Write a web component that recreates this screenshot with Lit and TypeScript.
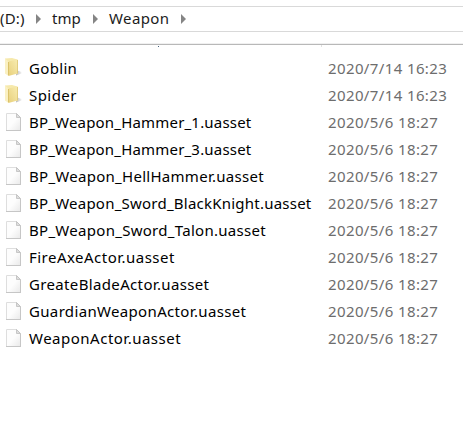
import { LitElement, html, css, svg } from "lit";
import { customElement } from "lit/decorators.js";
import { styleMap } from "lit/directives/style-map.js";

interface Entry {
  name: string;
  date: string;
  tracking: number;
  folder?: boolean;
}

const entries: Entry[] = [
  { name: "Goblin", date: "2020/7/14 16:23", tracking: 0.33, folder: true },
  { name: "Spider", date: "2020/7/14 16:23", tracking: 0.45, folder: true },
  { name: "BP_Weapon_Hammer_1.uasset", date: "2020/5/6 18:27", tracking: 0.19 },
  { name: "BP_Weapon_Hammer_3.uasset", date: "2020/5/6 18:27", tracking: 0.19 },
  { name: "BP_Weapon_HellHammer.uasset", date: "2020/5/6 18:27", tracking: 0.28 },
  { name: "BP_Weapon_Sword_BlackKnight.uasset", date: "2020/5/6 18:27", tracking: 0.23 },
  { name: "BP_Weapon_Sword_Talon.uasset", date: "2020/5/6 18:27", tracking: 0.29 },
  { name: "FireAxeActor.uasset", date: "2020/5/6 18:27", tracking: 0.48 },
  { name: "GreateBladeActor.uasset", date: "2020/5/6 18:27", tracking: 0.35 },
  { name: "GuardianWeaponActor.uasset", date: "2020/5/6 18:27", tracking: 0.34 },
  { name: "WeaponActor.uasset", date: "2020/5/6 18:27", tracking: 0.5 },
];

const folderIcon = svg`
  <defs>
    <linearGradient id="front" x1="1" y1="0" x2="0" y2="1">
      <stop offset="0" stop-color="#f8ecb0"/><stop offset="1" stop-color="#e8d07c"/>
    </linearGradient>
    <linearGradient id="shade" x1="0" y1="0" x2="1" y2="0">
      <stop offset="0" stop-color="#bcbcbc"/><stop offset="1" stop-color="#f2f2f2"/>
    </linearGradient>
  </defs>
  <path d="M16 15l5.500 2v1.500l-5.500 2z" fill="url(#shade)"/>
  <path d="M5 3.500l7-.5 5.500 1.500V18.500L8 19.500 5 18z" fill="#f6e9ac"/>
  <path d="M8.500 6.500L17.500 4.500V18.500l-9 2.500z" fill="url(#front)"/>
  <path d="M5 3.500l3.500 3v14.500L5 18.500z" fill="#faf0c2"/>
  <path d="M8.500 7v13.500" stroke="#d8bd62" stroke-width=".9"/>
  <path d="M17.500 5v13.500" stroke="#dcc470" stroke-width=".8"/>`;

const fileIcon = svg`
  <defs>
    <linearGradient id="paper" x1="0" y1="0" x2="1" y2="1">
      <stop offset=".5" stop-color="#fdfdfd"/><stop offset="1" stop-color="#e9e9e9"/>
    </linearGradient>
  </defs>
  <path d="M6.500 4.500h10l4 4v13h-14z" fill="url(#paper)" stroke="#dedede"/>
  <path d="M6 21.500h15M20.500 9v13" stroke="#c6c6c6" fill="none"/>
  <path d="M16.500 4.500v4h4z" fill="#dedede" stroke="#bcbcbc" stroke-width=".8"/>`;

@customElement("app-root")
export class AppRoot extends LitElement {
  static styles = css`
    :host {
      display: block;
      width: 463px;
      height: 427px;
      overflow: hidden;
      background: #fff;
      font: 15px/27px "Noto Sans", "Noto Sans CJK SC", sans-serif;
      color: #000;
    }
    .path {
      box-sizing: border-box;
      height: 26px;
      margin-top: 6px;
      border-top: 1px solid #d9d9d9;
      border-bottom: 1px solid #d9d9d9;
      display: flex;
      align-items: center;
      line-height: 22px;
      color: #1c1c1c;
    }
    .path span { padding-bottom: 2px; }
    .drive { width: 36px; letter-spacing: 0.2px; }
    .tmp { width: 41px; }
    .weapon { width: 72px; letter-spacing: 0.4px; }
    .arrow { width: 5px; height: 10px; flex: none; fill: #858585; }
    .gap { width: 11px; }
    .head {
      height: 23px;
      box-sizing: border-box;
      padding-top: 11px;
    }
    .rule {
      height: 2px;
      background: linear-gradient(#f0f0f0 50%, #b8b8b8 50%);
    }
    .ticks { display: flex; }
    .tick { width: 1px; height: 1px; margin: 1px 0 0 158px; background: #43617c; }
    .edge { width: 1px; height: 2px; margin-left: 162px; background: #e0e0e0; }
    .row { height: 27px; display: flex; white-space: pre; }
    .icon { width: 29px; height: 27px; flex: none; }
    .name { width: 299px; flex: none; }
    .date { color: #6d6d6d; letter-spacing: 0.38px; }
  `;

  arrow() {
    return html`<svg class="arrow" viewBox="0 0 5 10"><path d="M0 0l5 5-5 5z" /></svg>`;
  }

  render() {
    return html`
      <nav class="path">
        <span class="drive">(D:)</span>${this.arrow()}<span class="gap"></span>
        <span class="tmp">tmp</span>${this.arrow()}<span class="gap"></span>
        <span class="weapon">Weapon</span>${this.arrow()}
      </nav>
      <div class="head">
        <div class="rule"></div>
        <div class="ticks"><span class="tick"></span><span class="edge"></span></div>
      </div>
      <main>
        ${entries.map(
          (e) => html`<div class="row"><svg class="icon" viewBox="0 0 29 27">${e.folder ? folderIcon : fileIcon}</svg><span class="name" style=${styleMap({ letterSpacing: `${e.tracking}px` })}>${e.name}</span><span class="date">${e.date}</span></div>`
        )}
      </main>
    `;
  }
}
